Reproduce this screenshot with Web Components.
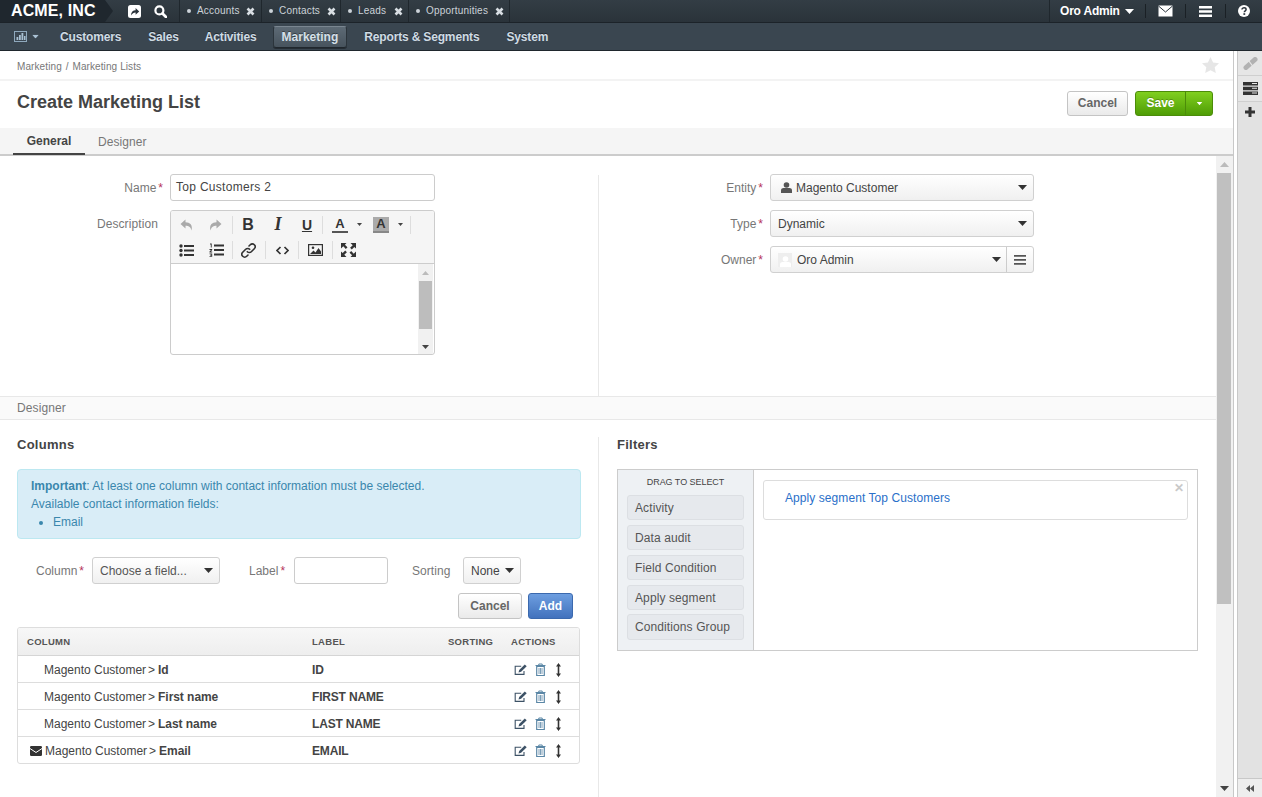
<!DOCTYPE html>
<html lang="en"><head><meta charset="utf-8"><title>Create Marketing List</title>
<style>
html,body{margin:0;padding:0;height:797px;overflow:hidden;background:#fff;font:12px/18px "Liberation Sans",Arial,sans-serif;color:#444}
</style></head><body>
<oro-app></oro-app>
<script>
const S=(w,h,b,vb)=>`<svg width="${w}" height="${h}" viewBox="${vb||`0 0 ${w} ${h}`}" style="display:block;flex:none" aria-hidden="true">${b}</svg>`;
const ICON={
share:c=>S(13,13,`<rect x="0" y="0" width="13" height="13" rx="2.5" fill="${c}"/><path d="M3 10.500C3 7 5 5.300 7.600 5.300V3l3.600 3.400-3.600 3.400V7.500C5.800 7.500 4.200 8.500 3 10.500Z" fill="#2b343c"/>`),
search:c=>S(13,13,`<circle cx="5.400" cy="5.400" r="4" fill="none" stroke="${c}" stroke-width="2.200"/><path d="M8.500 8.500l3.500 3.500" stroke="${c}" stroke-width="2.800" stroke-linecap="round"/>`),
close:c=>S(9,9,`<path d="M1.500 1.500l6 6M7.500 1.500l-6 6" stroke="${c}" stroke-width="2.600"/>`),
caret:(c,w=9,h=5)=>S(w,h,`<path d="M0 0H${w}L${w/2} ${h}Z" fill="${c}"/>`),
mail:c=>S(15,12,`<rect x=".5" y=".5" width="14" height="11" fill="#fff"/><path d="M.5 1l7 6 7-6" fill="none" stroke="#2b343c" stroke-width="1"/>`),
bars:c=>S(13,11,`<path d="M0 0h13v2.500H0zM0 4.200h13v2.500H0zM0 8.400h13v2.500H0z" fill="${c}"/>`),
help:c=>S(12,12,`<circle cx="6" cy="6" r="6" fill="${c}"/><path d="M4 4.600C4 3.400 5 2.800 6.100 2.800 7.300 2.800 8.100 3.500 8.100 4.500 8.100 5.800 6.300 5.900 6.300 7.300" fill="none" stroke="#2b343c" stroke-width="1.500"/><rect x="5.400" y="8.200" width="1.800" height="1.700" fill="#2b343c"/>`),
chart:c=>S(13,11,`<path d="M0 0h13v11H0z" fill="#8fa9bd"/><path d="M1 1h11v9H1z" fill="#3c4853"/><path d="M2.500 6h1.800v3H2.500zM5 4h1.800v5H5zM7.500 2h1.800v7H7.500zM10 5h1.500v4H10z" fill="#a9c1d3"/>`),
star:c=>S(17,16,`<path d="M8.500 0l2.600 5.400 5.900.800-4.300 4.100 1.100 5.700-5.300-2.800-5.300 2.800 1.100-5.700L0 6.200l5.900-.8z" fill="${c}"/>`),
undo:c=>S(13,12,`<path d="M5.500 .5L.5 5l5 4.500V6.800c3 0 5 .9 6 4.700C13 6 10 3.300 5.500 3.200z" fill="${c}"/>`),
redo:c=>S(13,12,`<path d="M7.500 .5l5 4.500-5 4.500V6.800c-3 0-5 .9-6 4.700C0 6 3 3.300 7.500 3.200z" fill="${c}"/>`),
ul:c=>S(15,13,`<circle cx="2" cy="2" r="1.700" fill="${c}"/><circle cx="2" cy="6.500" r="1.700" fill="${c}"/><circle cx="2" cy="11" r="1.700" fill="${c}"/><path d="M5 1h10v2H5zM5 5.500h10v2H5zM5 10h10v2H5z" fill="${c}"/>`),
ol:c=>S(15,14,`<path d="M1 .5h1.700v4H1.800V1.500H1zM.5 6h2.700v1L1.700 8.500h1.500v1H.5v-1L2 7H.5zM.5 10.500h2.700v3.300H.5v-.8h1.800v-.5H1v-.7h1.300v-.5H.5z" fill="${c}"/><path d="M5 1.500h10v2H5zM5 6h10v2H5zM5 10.500h10v2H5z" fill="${c}"/>`),
link:c=>S(15,15,`<g fill="none" stroke="${c}" stroke-width="1.600" stroke-linecap="round"><path d="M6.300 8.700a2.800 2.800 0 0 0 4 0l3-3a2.800 2.800 0 0 0-4-4L8 3"/><path d="M8.700 6.300a2.800 2.800 0 0 0-4 0l-3 3a2.800 2.800 0 0 0 4 4L7 12"/></g>`),
code:c=>S(13,9,`<path d="M4.500 1L1 4.500 4.500 8M8.500 1L12 4.500 8.500 8" fill="none" stroke="${c}" stroke-width="1.700"/>`),
image:c=>S(15,12,`<rect x=".6" y=".6" width="13.800" height="10.800" fill="#f5f5f5" stroke="${c}" stroke-width="1.200"/><path d="M2 10l3.500-3.500 2 2L10.500 4l2.500 3.500V10z" fill="${c}"/><circle cx="5" cy="3.800" r="1.300" fill="${c}"/>`),
full:c=>S(15,14,`<g fill="${c}"><path d="M0 0h5.500L3.900 1.700l2.600 2.500-1.700 1.700-2.500-2.600L0 5.500zM15 0v5.500l-1.700-1.600-2.500 2.600-1.700-1.700 2.600-2.500L9.500 0zM0 14V8.500l1.700 1.600 2.500-2.600 1.700 1.700-2.600 2.500L5.500 14zM15 14H9.500l1.600-1.700-2.600-2.500 1.700-1.700 2.500 2.600L15 8.500z"/></g>`),
user:c=>S(11,11,`<circle cx="5.500" cy="3" r="2.800" fill="${c}"/><path d="M0 11V8.300C0 6.800 1.300 6 2.500 6h6C9.700 6 11 6.800 11 8.300V11z" fill="${c}"/>`),
menu:c=>S(12,10,`<path d="M0 0h12v1.800H0zM0 4h12v1.800H0zM0 8h12v1.800H0z" fill="${c}"/>`),
env:c=>S(12,10,`<rect width="12" height="10" rx="1.200" fill="${c}"/><path d="M0 2.500l6 4 6-4" fill="none" stroke="#fff" stroke-width="1"/>`),
edit:c=>S(13,12,`<path d="M10 7v3.400H1.200V2.200h6" fill="none" stroke="${c}" stroke-width="1.100"/><path d="M4.500 8.500l.7-2.600L10.800.4 12.700 2.200 7.100 7.800z" fill="${c}"/>`),
trash:c=>S(11,13,`<path d="M.5 2.500h10M3.800 2.500V1h3.400v1.500" fill="none" stroke="${c}" stroke-width="1"/><path d="M1.700 3.500v9h7.600v-9z" fill="none" stroke="${c}" stroke-width="1.200"/><path d="M4 5v6M5.500 5v6M7 5v6" stroke="${c}" stroke-width=".8"/>`),
move:c=>S(5,14,`<path d="M2.500 0L5 3.500H3.300v7H5L2.500 14 0 10.500h1.700v-7H0z" fill="${c}"/>`),
pencil:c=>S(15,13,`<path d="M3 10.500L12 2.500" stroke="#b2b2b2" stroke-width="5" stroke-linecap="round"/><path d="M5.500 3.500l4.500 6" stroke="#e6e6e6" stroke-width="1.200"/>`),
list:c=>S(15,13,`<path d="M0 0h15v3.500H0zM0 4.700h15v3.500H0zM0 9.400h15v3.500H0z" fill="${c}"/><path d="M9 1h5v1H9zM9 5.700h5v1H9zM9 10.400h5v1H9z" fill="#e6e6e6"/>`),
plus:c=>S(10,10,`<path d="M3.500 0h3v3.500H10v3H6.500V10h-3V6.500H0v-3h3.500z" fill="${c}"/>`),
collapse:c=>S(8,7,`<path d="M4 0v7L0 3.500zM8 0v7L4 3.500z" fill="${c}"/>`),
};
const def=(name,css,html)=>customElements.define(name,class extends HTMLElement{
  constructor(){super();this.attachShadow({mode:'open'})}
  connectedCallback(){if(this._d)return;this._d=1;
    this.shadowRoot.innerHTML=`<style>${css}</style>`+(typeof html==='function'?html(this):html)}
});
const attr=(e,n,d='')=>e.hasAttribute(n)?e.getAttribute(n):d;

def('oro-icon',':host{display:inline-flex;align-items:center;justify-content:center}',e=>ICON[attr(e,'name')](attr(e,'color','#444')));

def('top-tab',`:host{display:flex;align-items:center;height:22px;border-right:1px solid #1f272d;padding:0 0 0 7px;color:#ccd3d9;font-size:10px;letter-spacing:.02em;box-sizing:border-box}
 i{width:4px;height:4px;border-radius:50%;background:#ccd3d9;margin-right:6px;flex:none}
 oro-icon{margin-left:auto;margin-right:var(--mr,5px)}`,
 `<i></i><slot></slot><oro-icon name="close" color="#d8dee3"></oro-icon>`);

def('top-sep',':host{display:block;width:1px;height:14px;background:#1a2025;flex:none}','');

def('top-bar',`:host{display:flex;align-items:center;height:22px;background:linear-gradient(#333d45,#2a333a);border-bottom:1px solid #1c2329;color:#fff;flex:none}
 .logo{display:flex;align-items:center;height:22px;width:105px;padding-left:11px;box-sizing:border-box;font-size:16px;font-weight:bold;background:#1f272e;color:#fff;letter-spacing:.12px;position:relative;flex:none}
 .logo::after{content:"";position:absolute;left:105px;top:0;border-left:8px solid #1f272e;border-top:11px solid transparent;border-bottom:11px solid transparent}
 .qa{display:flex;align-items:center;width:75px;flex:none;height:22px;border-right:1px solid #1f272d;box-sizing:border-box;padding-left:23px;gap:13px}
 .tabs{display:flex;height:22px}
 top-tab:nth-child(1){width:82px;--mr:6px}top-tab:nth-child(2){width:79px;--mr:4px}top-tab:nth-child(3){width:68px}top-tab:nth-child(4){width:101px}
 .right{margin-left:auto;display:flex;align-items:center;height:22px;flex:none}
 .user{display:flex;align-items:center;gap:5px;height:22px;width:96px;box-sizing:border-box;padding-left:10px;border-left:1px solid #1f272d;font-weight:bold;font-size:12px;letter-spacing:-.2px}
 .it{display:flex;justify-content:center;width:39px}`,
`<div class="logo">ACME, INC</div>
 <div class="qa"><oro-icon name="share" color="#fff"></oro-icon><oro-icon name="search" color="#fff"></oro-icon></div>
 <div class="tabs"><top-tab>Accounts</top-tab><top-tab>Contacts</top-tab><top-tab>Leads</top-tab><top-tab>Opportunities</top-tab></div>
 <div class="right"><div class="user">Oro Admin <oro-icon name="caret" color="#fff"></oro-icon></div><top-sep></top-sep>
 <div class="it"><oro-icon name="mail"></oro-icon></div><top-sep></top-sep>
 <div class="it"><oro-icon name="bars" color="#fff"></oro-icon></div><top-sep></top-sep>
 <div class="it" style="width:36px"><oro-icon name="help" color="#fff"></oro-icon></div></div>`);

def('nav-item',`:host{display:flex;align-items:center;box-sizing:border-box;height:22px;padding:0 8px;font-weight:bold;font-size:12px;letter-spacing:-.16px;color:#cfdbe4;border:1px solid transparent;border-radius:3px;text-shadow:0 -1px 0 rgba(0,0,0,.4)}
 :host([active]){letter-spacing:0;background:linear-gradient(#5d6a75,#47535d);border-color:#7a8690 #2b343b #20272d;color:#d6e0e8;box-shadow:0 1px 0 rgba(0,0,0,.35)}`,`<slot></slot>`);

def('main-nav',`:host{display:flex;align-items:center;height:28px;background:#3a4650;border-bottom:1px solid #1f272d;flex:none;box-sizing:border-box;gap:9px;padding-left:14px}
 .dash{display:flex;align-items:center;gap:4px;width:28px;flex:none}
 ::slotted(nav-item:nth-child(2)){margin-right:-1px}
 ::slotted(nav-item:nth-child(3)){margin-right:-2px}
 ::slotted(nav-item:nth-child(4)){margin-right:-1px}`,
 `<div class="dash"><oro-icon name="chart"></oro-icon><oro-icon name="caret" color="#a9c1d3" style="transform:scale(.75)"></oro-icon></div><slot></slot>`);

def('ui-btn',`:host{display:inline-flex;align-items:center;justify-content:center;box-sizing:border-box;height:26px;border:1px solid #c4c4c4;border-radius:3px;background:linear-gradient(#fff,#eaeaea);font-weight:bold;font-size:12px;color:#666;flex:none}
 :host([kind=primary]){background:linear-gradient(#6d9ee0,#4272bd);border-color:#3b69ae;color:#fff}`,`<slot></slot>`);

def('save-btn',`:host{display:flex;height:23px;border:1px solid #4c8c09;border-radius:3px;background:linear-gradient(#80cf1f,#4f9d05);color:#fff;font-weight:bold;font-size:12px;width:76px;flex:none}
 b{width:49px;display:flex;align-items:center;justify-content:center;border-right:1px solid #4c8c09;text-shadow:0 -1px 0 rgba(0,0,0,.25)}
 span{flex:1;display:flex;align-items:center;justify-content:center}`,
 `<b>Save</b><span><oro-icon name="caret" color="#fff" style="transform:scale(.65)"></oro-icon></span>`);

def('page-head',`:host{display:block;flex:none}
 .crumb{display:flex;align-items:center;justify-content:space-between;box-sizing:border-box;height:30px;padding:0 14px 0 17px;border-bottom:2px solid #f3f3f3;font-size:10px;color:#777}
 .crumb span{padding-top:4px;letter-spacing:.1px}
 .crumb u{text-decoration:none;margin:0 1px}
 .title{display:flex;align-items:center;justify-content:space-between;height:47px;padding:0 20px 0 17px}
 h1{margin:0 0 6px;font-size:18px;line-height:22px;color:#444;font-weight:bold}
 .acts{display:flex;gap:7px;margin-top:-3px}
 ui-btn{width:61px;height:25px}
 .tabs{display:flex;box-sizing:border-box;height:28px;background:#f5f5f5;border-bottom:2px solid #ccc;padding-left:13px;align-items:stretch}
 .tab{display:flex;align-items:center;justify-content:center;color:#777;box-sizing:border-box;padding-top:1px}
 .on{width:72px;color:#444;font-weight:bold;border-bottom:2px solid #444;margin-bottom:-1px}
 .off{margin-left:13px;letter-spacing:.05px}`,
 `<div class="crumb"><span>Marketing<u> / </u>Marketing Lists</span><oro-icon name="star" color="#e6e6e6"></oro-icon></div>
  <div class="title"><h1>Create Marketing List</h1><div class="acts"><ui-btn>Cancel</ui-btn><save-btn></save-btn></div></div>
  <div class="tabs"><div class="tab on">General</div><div class="tab off">Designer</div></div>`);

def('form-row',`:host{display:flex;margin-bottom:9px;align-items:flex-start}
 label{width:163px;flex:none;text-align:right;color:#777;margin-right:7px;height:27px;line-height:28px;box-sizing:border-box;white-space:nowrap}
 label.desc{padding-right:5px;letter-spacing:.1px}
 em{color:#b5335a;font-style:normal;margin-left:2px}
 .c{flex:none}`,
 e=>`<label class="${e.hasAttribute('req')?'':'desc'}">${attr(e,'label')}${e.hasAttribute('req')?'<em>*</em>':''}</label><div class="c"><slot></slot></div>`);

def('text-input',`:host{display:flex;align-items:center;box-sizing:border-box;width:var(--w,265px);height:27px;border:1px solid #ccc;border-radius:3px;padding:0 5px 2px;font-size:12px;color:#444;background:#fff;letter-spacing:.3px}`,`<slot></slot>`);

def('select-box',`:host{display:flex;align-items:center;box-sizing:border-box;width:var(--w,264px);height:27px;border:1px solid #d0d0d0;border-radius:3px;padding:0 6px 0 7px;font-size:12px;color:#444;background:linear-gradient(#fff,#f0f0f0)}
 .t{flex:1;display:flex;align-items:center;gap:4px;white-space:nowrap;overflow:hidden}
 .caret{flex:none}`,
 `<div class="t"><slot></slot></div><oro-icon class="caret" name="caret" color="#333"></oro-icon>`);

def('owner-select',`:host{display:flex;width:264px;height:27px;box-sizing:border-box;border:1px solid #d0d0d0;border-radius:3px;background:linear-gradient(#fff,#f0f0f0);font-size:12px;color:#444}
 .m{display:flex;align-items:center;flex:none;width:236px;box-sizing:border-box;border-right:1px solid #ccc;padding:0 5px 0 7px}
 .a{width:14px;height:14px;background:#eee;margin-right:5px;display:flex;align-items:flex-end;justify-content:center;overflow:hidden}
 .t{flex:1}
 .b{flex:1;display:flex;align-items:center;justify-content:center}`,
 `<div class="m"><div class="a">${ICON.user('#fff')}</div><span class="t">Oro Admin</span><oro-icon name="caret" color="#333"></oro-icon></div><div class="b"><oro-icon name="menu" color="#555"></oro-icon></div>`);

const cell=(w,inner,st='')=>`<div class="i" style="width:${w}px;${st}">${inner}</div>`;
def('rt-editor',`:host{display:block;box-sizing:border-box;width:265px;height:145px;border:1px solid #ccc;border-radius:3px;overflow:hidden;background:#fff}
 .tb{height:52px;background:#f5f5f5;border-bottom:1px solid #ccc;display:flex;flex-direction:column}
 .r{display:flex;align-items:center;height:26px;padding-left:1px}
 .r>*{flex:none}
 .i{display:flex;align-items:center;justify-content:center;color:#333;font-weight:bold}
 .sep{width:1px;height:18px;background:#ddd}
 .fc{display:flex;align-items:center;gap:9px}
 .fc b{display:block;font-size:13px;line-height:14px;width:16px;text-align:center;border-bottom:2px solid #555;color:#333}
 .fc.bg b{background:#aaa;border-bottom-color:#888}
 .body{display:flex;height:91px;justify-content:flex-end;padding-right:1px}
 .sb{width:15px;background:#f1f1f1;display:flex;flex-direction:column;align-items:center}
 .thumb{width:13px;height:48px;background:#bdbdbd;flex:none}
 .sp{flex:1}
 .ar{height:17px;display:flex;align-items:center;flex:none}`,
 `<div class="tb"><div class="r" style="padding-top:1px">
   ${cell(29,ICON.undo('#aaa'))}${cell(29,ICON.redo('#aaa'))}<div class="sep" style="margin:0 0 0 2px"></div>
   ${cell(30,'B','font-size:16px')}${cell(30,'I','font:italic bold 18px \'Liberation Serif\',serif')}${cell(28,'<u>U</u>','font-size:14px')}<div class="sep" style="margin-left:1px"></div>
   <div class="fc" style="margin-left:9px"><b>A</b>${ICON.caret('#444',5,3)}</div><div class="fc bg" style="margin-left:11px"><b>A</b>${ICON.caret('#444',5,3)}</div><div class="sep" style="margin-left:7px"></div></div>
   <div class="r">${cell(29,ICON.ul('#333'))}${cell(30,ICON.ol('#333'))}<div class="sep" style="margin-left:1px"></div>
   ${cell(31,ICON.link('#333'))}<div class="sep" style="margin-left:1px"></div>
   ${cell(32,ICON.code('#333'))}<div class="sep"></div>
   ${cell(33,ICON.image('#333'))}<div class="sep"></div>
   ${cell(31,ICON.full('#333'))}</div></div>
  <div class="body"><div class="sb"><div class="ar">${ICON.caret('#bbb',7,4).replace('<path','<path transform="rotate(180 3.500 2)"')}</div><div class="thumb"></div><div class="sp"></div><div class="ar">${ICON.caret('#444',7,4)}</div></div></div>`);

def('alert-box',`:host{display:block;box-sizing:border-box;width:564px;height:70px;padding:7px 13px;background:#d9edf7;border:1px solid #bce8f1;border-radius:4px;color:#3a87ad}
 ul{margin:0;padding:0 0 0 22px}
 li{line-height:18px}
 b{font-weight:bold}`,
 `<div><b>Important</b>: At least one column with contact information must be selected.</div><div>Available contact information fields:</div><ul><li>Email</li></ul>`);

def('col-form',`:host{display:block}
 .row{display:flex;align-items:center;height:27px;padding-left:19px;color:#777}
 .l{flex:none;white-space:nowrap}
 em{color:#b5335a;font-style:normal;margin-left:2px}
 .btns{display:flex;justify-content:flex-end;gap:6px;width:556px;margin-top:9px}`,
 `<div class="row"><span class="l" style="width:56px">Column<em>*</em></span><select-box style="--w:128px;color:#555">Choose a field...</select-box>
  <span class="l" style="width:45px;margin-left:29px">Label<em>*</em></span><text-input style="--w:94px"></text-input>
  <span class="l" style="width:51px;margin-left:24px;letter-spacing:.05px">Sorting</span><select-box style="--w:58px;color:#444">None</select-box></div>
  <div class="btns"><ui-btn style="width:64px">Cancel</ui-btn><ui-btn kind="primary" style="width:45px">Add</ui-btn></div>`);

def('col-row',`:host{display:grid;grid-template-columns:285px 136px 63px 1fr;height:27px;box-sizing:border-box;align-items:center;border-bottom:1px solid #ddd;padding-top:1px;color:#444}
 :host(:last-child){border-bottom:0;padding-top:0}
 .c{display:flex;align-items:center;padding-left:26px;white-space:nowrap}
 .c.mail{padding-left:12px}
 .c.mail oro-icon{margin-right:3px}
 .c b,.l{font-weight:bold}
 .c b{letter-spacing:-.05px}
 .gt{margin:0 3px 0 2px}
 .l{padding-left:9px;letter-spacing:-.18px}
 .a{display:flex;align-items:center;padding-left:12px;grid-column:4}
 .a oro-icon:nth-child(1){margin-right:8px}.a oro-icon:nth-child(2){margin-right:10px}`,
 e=>{const m=e.hasAttribute('mail');return `<div class="c ${m?'mail':''}">${m?'<oro-icon name="env" color="#333"></oro-icon>':''}<span>Magento Customer</span><span class="gt">&gt;</span><b>${attr(e,'field')}</b></div><div class="l">${attr(e,'label')}</div><div class="a"><oro-icon name="edit" color="#3d5266"></oro-icon><oro-icon name="trash" color="#5b87a6"></oro-icon><oro-icon name="move" color="#333"></oro-icon></div>`});

def('col-table',`:host{display:block;box-sizing:border-box;width:563px;height:137px;margin-top:8px;border:1px solid #ddd;border-radius:3px;overflow:hidden}
 .h{display:grid;grid-template-columns:285px 136px 63px 1fr;height:28px;align-items:center;background:linear-gradient(#f7f7f7,#eee);border-bottom:1px solid #d5d5d5;font-size:9.5px;font-weight:bold;color:#555;letter-spacing:.03em;box-sizing:border-box}
 .h span{padding-left:9px}`,
 `<div class="h"><span>COLUMN</span><span>LABEL</span><span>SORTING</span><span>ACTIONS</span></div><slot></slot>`);

def('filter-item',`:host{display:flex;align-items:center;box-sizing:border-box;width:117px;height:25px;padding-left:7px;background:#e6e9ed;border:1px solid #dcdfe3;border-radius:3px;color:#555;margin-bottom:5px;letter-spacing:.1px}
 :host(:last-child){margin-top:-1px;height:26px}`,`<slot></slot>`);

def('filter-box',`:host{display:flex;box-sizing:border-box;width:581px;height:182px;border:1px solid #ccc}
 .l{width:136px;flex:none;box-sizing:border-box;background:#eef1f4;border-right:1px solid #ccc;padding:0 9px}
 h5{margin:0;height:25px;line-height:25px;font-size:9px;font-weight:normal;text-align:center;color:#444;letter-spacing:-.05px}
 .r{flex:1;padding:10px 9px 0}
 .card{display:flex;justify-content:space-between;box-sizing:border-box;height:40px;border:1px solid #ddd;border-radius:3px;padding:8px 3px 0 21px}
 a{color:#2a6fc9;line-height:18px;letter-spacing:.07px}
 .x{color:#c9c9c9;font-weight:bold;font-size:12px;line-height:13px;margin-top:-7px}`,
 `<div class="l"><h5>DRAG TO SELECT</h5><slot></slot></div><div class="r"><div class="card"><a>Apply segment Top Customers</a><span class="x">✕</span></div></div>`);

def('fake-scroll',`:host{display:flex;flex-direction:column;align-items:center;width:17px;flex:none;background:#f1f1f1;box-sizing:border-box;padding-right:1px}
 .ar{height:17px;display:flex;align-items:center;flex:none}
 .th{width:14px;height:431px;background:#c0c0c0;flex:none}
 .sp{flex:1}`,
 `<div class="ar">${ICON.caret('#bbb',9,5).replace('<path','<path transform="rotate(180 4.500 2.500)"')}</div><div class="th"></div><div class="sp"></div><div class="ar">${ICON.caret('#444',9,5)}</div>`);

def('side-bar',`:host{display:flex;flex:none;width:29px;height:100%;box-sizing:border-box;border-left:1px solid #c8c8c8;background:#fff}
 .in{margin-left:3px;flex:1;border-left:1px solid #c8c8c8;background:#e2e2e2;display:flex;flex-direction:column}
 .i{display:flex;align-items:center;justify-content:center;height:25px;border-bottom:1px solid #cfcfcf;background:#e6e6e6;flex:none;box-sizing:border-box}
 .i+.i{height:26px}
 .i:nth-child(3){height:25px;border:0;background:transparent;align-items:flex-start;padding-top:5px}
 .sp{flex:1}
 .b{height:19px;display:flex;align-items:center;justify-content:center;background:#eee;border-top:1px solid #c8c8c8;box-sizing:border-box;flex:none}`,
 `<div class="in"><div class="i"><oro-icon name="pencil"></oro-icon></div><div class="i"><oro-icon name="list" color="#333"></oro-icon></div><div class="i"><oro-icon name="plus" color="#333"></oro-icon></div><div class="sp"></div><div class="b"><oro-icon name="collapse" color="#555"></oro-icon></div></div>`);

def('section-band',`:host{display:block;height:24px;box-sizing:border-box;background:#fafafa;border-top:1px solid #e8e8e8;border-bottom:1px solid #e8e8e8;padding-left:17px;line-height:22px;color:#777;letter-spacing:.1px;flex:none}`,`<slot></slot>`);

def('two-cols',`:host{display:grid;grid-template-columns:599px 1fr;align-items:stretch}
 ::slotted([slot=a]){border-right:1px solid #e8e8e8;box-sizing:border-box}`,`<slot name="a"></slot><slot name="b"></slot>`);

def('sec-title',`:host{display:block;font-size:13px;font-weight:bold;color:#444;line-height:14px;padding-top:1px;margin-bottom:17px;letter-spacing:.25px}`,`<slot></slot>`);

def('pane-block',`:host{display:block;min-width:0}`,`<slot></slot>`);

def('oro-app',`:host{display:flex;flex-direction:column;width:1262px;height:797px;overflow:hidden}
 .body{display:flex;flex:1;min-height:0}
 .main{flex:1;min-width:0;display:flex;flex-direction:column}
 .scroll{flex:1;min-height:0;display:flex;overflow:hidden}
 .content{flex:1;min-width:0;overflow:hidden;display:flex;flex-direction:column}
 .des{flex:1;padding-top:17px;box-sizing:border-box;min-height:0}
 .des two-cols{height:100%}`,
 `<top-bar></top-bar>
 <main-nav><nav-item>Customers</nav-item><nav-item>Sales</nav-item><nav-item>Activities</nav-item><nav-item active>Marketing</nav-item><nav-item>Reports &amp; Segments</nav-item><nav-item>System</nav-item></main-nav>
 <div class="body"><div class="main"><page-head></page-head>
 <div class="scroll"><div class="content">
  <two-cols style="height:240px;flex:none;padding-top:19px;box-sizing:border-box">
   <pane-block slot="a">
     <div style="margin-top:-1px"><form-row label="Name" req><text-input>Top Customers 2</text-input></form-row>
     <form-row label="Description"><rt-editor></rt-editor></form-row></div>
   </pane-block>
   <pane-block slot="b" style="margin:-1px 0 0 1px">
     <form-row label="Entity" req><select-box><oro-icon name="user" color="#555" style="margin-left:3px"></oro-icon>Magento Customer</select-box></form-row>
     <form-row label="Type" req><select-box>Dynamic</select-box></form-row>
     <form-row label="Owner" req><owner-select></owner-select></form-row>
   </pane-block>
  </two-cols>
  <section-band>Designer</section-band>
  <div class="des"><two-cols>
   <pane-block slot="a" style="padding-left:17px">
     <sec-title>Columns</sec-title>
     <alert-box></alert-box>
     <div style="height:18px"></div>
     <col-form></col-form>
     <col-table><col-row field="Id" label="ID"></col-row><col-row field="First name" label="FIRST NAME"></col-row><col-row field="Last name" label="LAST NAME"></col-row><col-row mail field="Email" label="EMAIL"></col-row></col-table>
   </pane-block>
   <pane-block slot="b" style="padding-left:18px">
     <sec-title>Filters</sec-title>
     <filter-box><filter-item>Activity</filter-item><filter-item>Data audit</filter-item><filter-item>Field Condition</filter-item><filter-item>Apply segment</filter-item><filter-item>Conditions Group</filter-item></filter-box>
   </pane-block>
  </two-cols></div>
 </div><fake-scroll></fake-scroll></div></div>
 <side-bar></side-bar></div>`);
</script></body></html>
